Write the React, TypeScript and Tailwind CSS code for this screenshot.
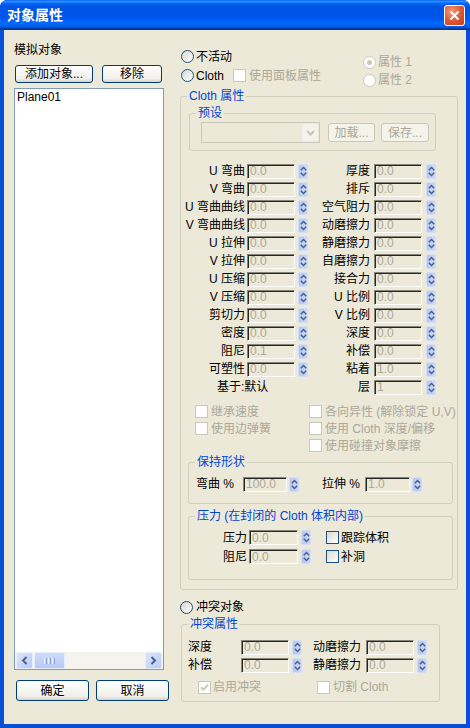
import React from 'react'

type Cls = { className?: string }

const Spin = ({ className = '' }: Cls) => (
  <div className={`flex h-[15px] w-[10px] shrink-0 items-center justify-center rounded-[2px] border border-[#d3ddf8] bg-[linear-gradient(90deg,#b4c7f5,#c9d7fb)] ${className}`}>
    <svg width="7" height="11" viewBox="0 0 7 11">
      <path d="M0.8 4.2 L3.5 1.5 L6.2 4.2" fill="none" stroke="#4d6185" strokeWidth="1.5" />
      <path d="M0.8 6.8 L3.5 9.5 L6.2 6.8" fill="none" stroke="#4d6185" strokeWidth="1.5" />
    </svg>
  </div>
)

const Field = ({ value = '0.0', className = '' }: Cls & { value?: string }) => (
  <div className={`flex h-[15px] shrink-0 items-center border border-t-[#85837a] border-l-[#85837a] border-r-white border-b-white bg-[#ece9d8] pl-[2px] text-[12px] leading-none text-[#aca899] shadow-[inset_1px_1px_0_#262626] ${className}`}>
    {value}
  </div>
)

const Check = ({ disabled = false, checked = false, className = '' }: Cls & { disabled?: boolean; checked?: boolean }) => (
  <div className={`flex h-[13px] w-[13px] shrink-0 items-center justify-center border ${disabled ? 'border-[#cac8bb] bg-white' : 'border-[#1c5180] bg-[linear-gradient(135deg,#dcdad0,#ffffff)]'} ${className}`}>
    {checked && (
      <svg width="9" height="9" viewBox="0 0 9 9">
        <path d="M1 4.2 L3.4 6.6 L8 1.8" fill="none" stroke="#cac8bb" strokeWidth="2" />
      </svg>
    )}
  </div>
)

const Radio = ({ disabled = false, checked = false, className = '' }: Cls & { disabled?: boolean; checked?: boolean }) => (
  <div className={`flex h-[13px] w-[13px] shrink-0 items-center justify-center rounded-full border ${disabled ? 'border-[#cac8bb] bg-white' : 'border-[#1c5180] bg-[linear-gradient(135deg,#d8d6cc,#ffffff)]'} ${className}`}>
    {checked && <div className="h-[5px] w-[5px] rounded-full bg-[#cac8bb]" />}
  </div>
)

const Btn = ({ children, className = '', disabled = false }: Cls & { children: React.ReactNode; disabled?: boolean }) => (
  <div className={`flex shrink-0 items-center justify-center rounded-[3px] border text-[12px] ${disabled ? 'border-[#cac8bb] bg-[#f5f4ea] text-[#aca899]' : 'border-[#003c74] bg-[linear-gradient(#ffffff,#f0efe9_80%,#d8d2c6)] text-black'} ${className}`}>
    {children}
  </div>
)

const Group = ({ label, className = '', children }: Cls & { label: string; children: React.ReactNode }) => (
  <fieldset className={`rounded-[3px] border border-[#d0d0bf] ${className}`}>
    <legend className="ml-[6px] whitespace-nowrap px-[2px] text-[12px] leading-[16px] text-[#0046d5]">{label}</legend>
    {children}
  </fieldset>
)

const ScrollBtn = ({ dir }: { dir: 'l' | 'r' }) => (
  <div className="flex h-[17px] w-[17px] items-center justify-center rounded-[2px] border border-[#e6edfc] bg-[linear-gradient(135deg,#dbe5fc,#b9ccf6)]">
    <svg width="7" height="9" viewBox="0 0 7 9">
      <path d={dir === 'l' ? 'M5.5 1 L2 4.5 L5.5 8' : 'M1.5 1 L5 4.5 L1.5 8'} fill="none" stroke="#4d6185" strokeWidth="2" />
    </svg>
  </div>
)

const leftParams: [string, string][] = [
  ['U 弯曲', '0.0'],
  ['V 弯曲', '0.0'],
  ['U 弯曲曲线', '0.0'],
  ['V 弯曲曲线', '0.0'],
  ['U 拉伸', '0.0'],
  ['V 拉伸', '0.0'],
  ['U 压缩', '0.0'],
  ['V 压缩', '0.0'],
  ['剪切力', '0.0'],
  ['密度', '0.0'],
  ['阻尼', '0.1'],
  ['可塑性', '0.0'],
]

const rightParams: [string, string][] = [
  ['厚度', '0.0'],
  ['排斥', '0.0'],
  ['空气阻力', '0.0'],
  ['动磨擦力', '0.0'],
  ['静磨擦力', '0.0'],
  ['自磨擦力', '0.0'],
  ['接合力', '0.0'],
  ['U 比例', '0.0'],
  ['V 比例', '0.0'],
  ['深度', '0.0'],
  ['补偿', '0.0'],
  ['粘着', '1.0'],
  ['层', '1'],
]

const App = () => {
  return (
    <div className="flex h-[728px] w-[470px] flex-col overflow-hidden rounded-t-[7px] bg-[#0a4fd8] font-[family-name:'Liberation_Sans','Noto_Sans_CJK_SC',sans-serif] text-[12px] leading-[16px] text-black">
      {/* title bar */}
      <div className="flex h-[30px] shrink-0 items-center justify-between bg-[linear-gradient(180deg,#0058ee_0%,#3593ff_4%,#288eff_6%,#127dff_8%,#036ffc_10%,#0262ee_14%,#0057e5_20%,#0054e3_24%,#0055eb_56%,#005bf5_66%,#026afe_76%,#0062ef_86%,#0052d6_92%,#0040ab_94%,#003092_100%)] pl-[7px] pr-[5px]">
        <span className="text-[14px] font-bold text-white">对象属性</span>
        <div className="flex h-[21px] w-[21px] items-center justify-center rounded-[3px] border border-white bg-[radial-gradient(circle_at_35%_30%,#f29a7a,#e0552f_55%,#c23c19)]">
          <svg width="11" height="11" viewBox="0 0 11 11">
            <path d="M1.5 1.5 L9.5 9.5 M9.5 1.5 L1.5 9.5" stroke="white" strokeWidth="2" />
          </svg>
        </div>
      </div>

      {/* client */}
      <div className="mx-[4px] mb-[4px] flex flex-1 bg-[#ece9d8]">
        {/* left column */}
        <div className="ml-[10px] flex w-[155px] flex-col">
          <div className="mt-[12px]">模拟对象</div>
          <div className="mt-[7px] flex">
            <Btn className="ml-[1px] h-[18px] w-[78px]">添加对象...</Btn>
            <Btn className="ml-[9px] h-[18px] w-[60px]">移除</Btn>
          </div>
          <div className="mt-[5px] flex h-[582px] w-[150px] flex-col border border-[#7f9db9] bg-white">
            <div className="flex-1 pl-[2px]">Plane01</div>
            <div className="flex h-[17px] items-center justify-between bg-[#f4f3ee] px-[1px]">
              <div className="flex items-center">
                <ScrollBtn dir="l" />
                <div className="ml-[1px] flex h-[17px] w-[31px] items-center justify-center gap-[1px] rounded-[2px] border border-[#e6edfc] bg-[linear-gradient(180deg,#cddafc,#b7caf5)]">
                  <div className="h-[6px] w-[1px] bg-[#eef3fe]" />
                  <div className="h-[6px] w-[1px] bg-[#8ca4d9]" />
                  <div className="h-[6px] w-[1px] bg-[#eef3fe]" />
                  <div className="h-[6px] w-[1px] bg-[#8ca4d9]" />
                  <div className="h-[6px] w-[1px] bg-[#eef3fe]" />
                  <div className="h-[6px] w-[1px] bg-[#8ca4d9]" />
                </div>
              </div>
              <ScrollBtn dir="r" />
            </div>
          </div>
          <div className="mt-[10px] flex">
            <Btn className="ml-[2px] h-[21px] w-[73px]">确定</Btn>
            <Btn className="ml-[7px] h-[21px] w-[73px]">取消</Btn>
          </div>
        </div>

        {/* right column */}
        <div className="ml-[11px] flex w-[278px] flex-col">
          <div className="mt-[17px] flex h-[41px]">
            <div className="w-[183px]">
              <div className="flex h-[19px] items-center gap-[2px] pl-[1px]">
                <Radio />
                <span>不活动</span>
              </div>
              <div className="flex h-[19px] items-center pl-[1px]">
                <Radio />
                <span className="ml-[2px] w-[37px]">Cloth</span>
                <Check disabled />
                <span className="ml-[3px] text-[#aca899]">使用面板属性</span>
              </div>
            </div>
            <div className="mt-[6px]">
              <div className="flex h-[18px] items-center gap-[2px]">
                <Radio disabled checked />
                <span className="text-[#aca899]">属性 1</span>
              </div>
              <div className="flex h-[18px] items-center gap-[2px]">
                <Radio disabled />
                <span className="text-[#aca899]">属性 2</span>
              </div>
            </div>
          </div>

          <Group label="Cloth 属性" className="w-[278px]">
            <Group label="预设" className="ml-[8px] mt-[1px] w-[247px]">
              <div className="ml-[11px] mt-[1px] flex items-center">
                <div className="flex h-[21px] w-[119px] items-center justify-end border border-[#cac8bb] bg-[#ece9d8] pr-[1px]">
                  <div className="flex h-[17px] w-[16px] items-center justify-center rounded-[2px] bg-[#f3f2ec]">
                    <svg width="9" height="6" viewBox="0 0 9 6">
                      <path d="M1 1 L4.5 4.5 L8 1" fill="none" stroke="#c9c7ba" strokeWidth="2" />
                    </svg>
                  </div>
                </div>
                <Btn disabled className="ml-[8px] h-[19px] w-[47px]">加载...</Btn>
                <Btn disabled className="ml-[6px] h-[19px] w-[48px]">保存...</Btn>
              </div>
              <div className="h-[7px]" />
            </Group>

            <div className="mt-[11px] flex flex-col">
              {rightParams.map(([rl, rv], i) => (
                <div key={rl} className="flex h-[18px] items-center">
                  {i < leftParams.length ? (
                    <>
                      <div className="w-[65px] whitespace-nowrap pr-[1px] text-right">{leftParams[i][0]}</div>
                      <Field value={leftParams[i][1]} className="ml-[1px] w-[48px]" />
                      <Spin className="ml-[3px]" />
                    </>
                  ) : (
                    <div className="w-[127px] pl-[36px]">基于:默认</div>
                  )}
                  <div className="w-[64px] whitespace-nowrap pr-[2px] text-right">{rl}</div>
                  <Field value={rv} className="ml-[2px] w-[48px]" />
                  <Spin className="ml-[4px]" />
                </div>
              ))}
            </div>

            <div className="mt-[7px] flex flex-col text-[#aca899]">
              <div className="flex h-[17px] items-center pl-[14px]">
                <div className="flex w-[114px] items-center gap-[3px]">
                  <Check disabled />
                  <span>继承速度</span>
                </div>
                <div className="flex items-center gap-[3px] whitespace-nowrap">
                  <Check disabled />
                  <span>各向异性 (解除锁定 U,V)</span>
                </div>
              </div>
              <div className="flex h-[17px] items-center pl-[14px]">
                <div className="flex w-[114px] items-center gap-[3px]">
                  <Check disabled />
                  <span>使用边弹簧</span>
                </div>
                <div className="flex items-center gap-[3px] whitespace-nowrap">
                  <Check disabled />
                  <span>使用 Cloth 深度/偏移</span>
                </div>
              </div>
              <div className="flex h-[17px] items-center pl-[128px]">
                <div className="flex items-center gap-[3px] whitespace-nowrap">
                  <Check disabled />
                  <span>使用碰撞对象摩擦</span>
                </div>
              </div>
            </div>

            <Group label="保持形状" className="ml-[7px] w-[265px]">
              <div className="mt-[5px] flex h-[18px] items-center pl-[7px]">
                <span className="w-[47px]">弯曲 %</span>
                <Field value="100.0" className="w-[44px]" />
                <Spin className="ml-[2px]" />
                <span className="ml-[23px] w-[43px]">拉伸 %</span>
                <Field value="1.0" className="w-[45px]" />
                <Spin className="ml-[2px]" />
              </div>
              <div className="h-[10px]" />
            </Group>

            <Group label="压力 (在封闭的 Cloth 体积内部)" className="ml-[7px] mt-[4px] w-[265px]">
              <div className="mt-[4px] flex flex-col">
                <div className="flex h-[19px] items-center">
                  <div className="w-[60px] pr-[2px] text-right">压力</div>
                  <Field className="w-[49px]" />
                  <Spin className="ml-[3px]" />
                  <Check className="ml-[15px]" />
                  <span className="ml-[2px]">跟踪体积</span>
                </div>
                <div className="flex h-[19px] items-center">
                  <div className="w-[60px] pr-[2px] text-right">阻尼</div>
                  <Field className="w-[49px]" />
                  <Spin className="ml-[3px]" />
                  <Check className="ml-[15px]" />
                  <span className="ml-[2px]">补洞</span>
                </div>
              </div>
              <div className="h-[13px]" />
            </Group>
            <div className="h-[9px]" />
          </Group>

          <div className="mt-[8px] flex h-[18px] items-center gap-[3px]">
            <Radio />
            <span>冲突对象</span>
          </div>

          <Group label="冲突属性" className="ml-[1px] w-[259px]">
            <div className="mt-[6px] flex flex-col">
              {[
                ['深度', '动磨擦力'],
                ['补偿', '静磨擦力'],
              ].map(([a, b]) => (
                <div key={a} className="flex h-[18px] items-center pl-[6px]">
                  <span className="w-[53px]">{a}</span>
                  <Field className="w-[48px]" />
                  <Spin className="ml-[3px]" />
                  <span className="ml-[11px] w-[53px] whitespace-nowrap">{b}</span>
                  <Field className="w-[48px]" />
                  <Spin className="ml-[3px]" />
                </div>
              ))}
            </div>
            <div className="mt-[4px] flex h-[18px] items-center pl-[16px] text-[#aca899]">
              <div className="flex w-[119px] items-center gap-[2px]">
                <Check disabled checked />
                <span>启用冲突</span>
              </div>
              <div className="flex items-center gap-[3px]">
                <Check disabled />
                <span>切割 Cloth</span>
              </div>
            </div>
            <div className="h-[5px]" />
          </Group>
        </div>
      </div>
    </div>
  )
}

export default App
